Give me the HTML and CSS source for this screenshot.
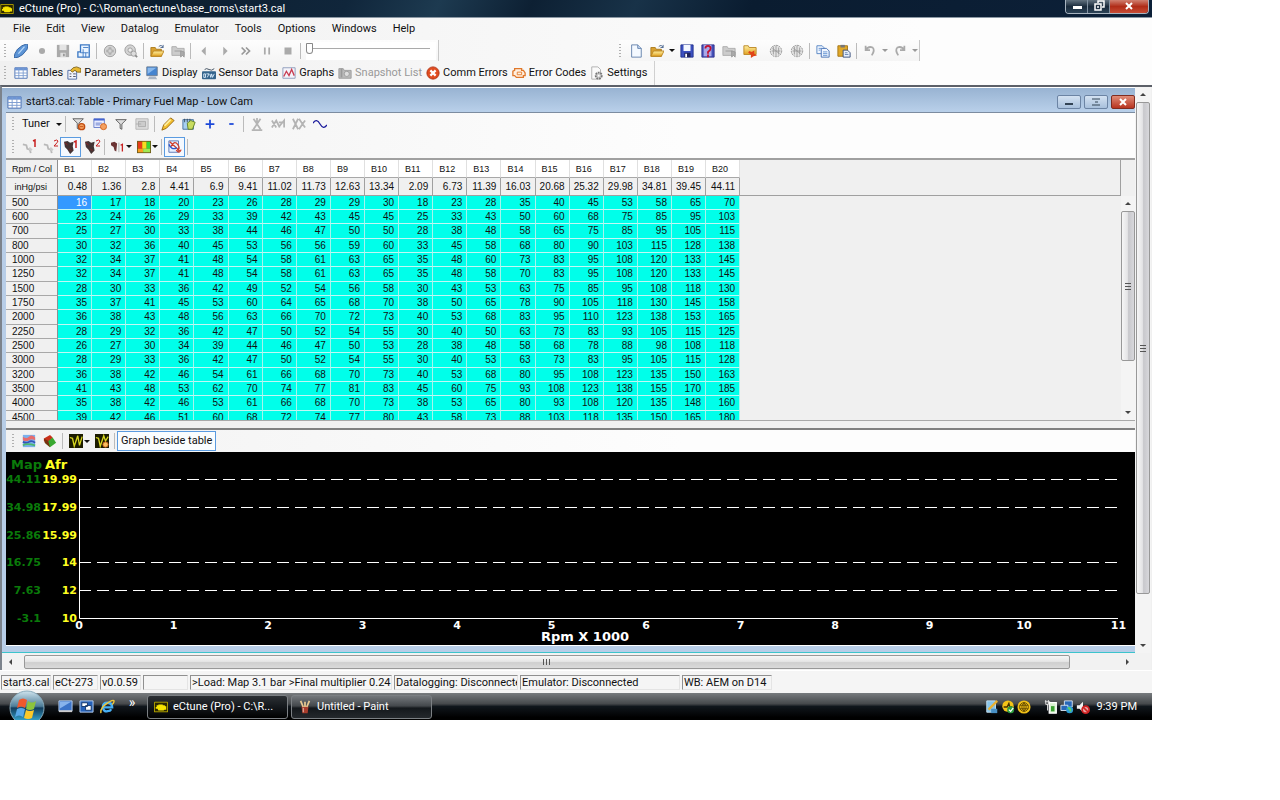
FILE: index.html
```
<!DOCTYPE html>
<html lang="en">
<head>
    <meta charset="UTF-8">
    <meta name="viewport" content="width=device-width, initial-scale=1.0">
    <title>eCtune (Pro)</title>
    <link rel="stylesheet" href="styles.css">
</head>
<body>
    <!-- icon set -->
    <svg class="defs" aria-hidden="true">
        <linearGradient id="gold" x2="0" y2="1"><stop stop-color="#fff0a0"/><stop offset="1" stop-color="#e0a020"/></linearGradient>
        <linearGradient id="orb" x2="0" y2="1"><stop stop-color="#cfe4ee"/><stop offset=".45" stop-color="#4d7d98"/><stop offset=".5" stop-color="#123c5c"/><stop offset="1" stop-color="#3fc4f0"/></linearGradient>
        <symbol id="i-engine" viewBox="0 0 16 12"><rect width="16" height="12" rx="1" fill="#b8a800"/><rect x="1" y="1" width="14" height="10" fill="#2a2600"/><path d="M2 6h1V4h2V3h5v1h2l1 1h1v4h-2l-1 1H5L4 8H2z" fill="#f6e400"/></symbol>
        <symbol id="i-plug" viewBox="0 0 16 16"><path d="M0 16l1-5 3-5 5-4 5-2 2 1-1 5-5 6-5 3z" fill="#5c94d6" stroke="#2c5c9c"/><path d="M5 11l7-8" stroke="#b8d8f8" stroke-width="1.5"/></symbol>
        <symbol id="i-dot" viewBox="0 0 16 16"><circle cx="8" cy="8" r="3.5" fill="#aaa"/></symbol>
        <symbol id="i-save-off" viewBox="0 0 16 16"><path d="M1 1h14v14H1z" fill="#aaa"/><path d="M4 1h8v6H4z" fill="#e4e4e4"/><path d="M5 10h6v5H5z" fill="#ddd"/><path d="M8 11h2v3H8z" fill="#999"/></symbol>
        <symbol id="i-save" viewBox="0 0 16 16"><path d="M1 1h14v14H1z" fill="#3c50c0" stroke="#20308c"/><path d="M4 1h8v7H4z" fill="#f4f8ff"/><path d="M5 10h7v5H5z" fill="#20245c"/><path d="M6 11h2v4H6z" fill="#fff"/></symbol>
        <symbol id="i-save-q" viewBox="0 0 16 16"><path d="M1 1h14v14H1z" fill="#4450b8" stroke="#30308c"/><path d="M3 1h9v13H3z" fill="#a8a8e8"/><path d="M5 5q0-3 3-3t3 3q0 2-3 4v2M8 12v3" fill="none" stroke="#c01030" stroke-width="2"/></symbol>
        <symbol id="i-map" viewBox="0 0 16 16"><path d="M4 1h10v14H1V9h3z" fill="#eaf4ff" stroke="#3c78c4" stroke-width="1.5"/><path d="M4 2v8h9M7 6v9M10 10v5M7 4h6" fill="none" stroke="#3c78c4"/></symbol>
        <symbol id="i-disc" viewBox="0 0 16 16"><circle cx="8" cy="8" r="6.5" fill="#d4d4d4" stroke="#999"/><path d="M8 4v8M4 8h8" stroke="#999" stroke-width="3"/><path d="M8 5v6M5 8h6" stroke="#eee"/></symbol>
        <symbol id="i-disc-s" viewBox="0 0 16 16"><circle cx="7" cy="7" r="6" fill="#d4d4d4" stroke="#999"/><circle cx="7" cy="7" r="2.5" fill="#eee" stroke="#999"/><circle cx="11" cy="11" r="3" fill="#ddd" stroke="#999"/><path d="M13 13l2 2" stroke="#888" stroke-width="2"/></symbol>
        <symbol id="i-folder" viewBox="0 0 16 16"><path d="M1 14V4h5l1 2h6v8z" fill="#d8a030" stroke="#a87818"/><path d="M1 14l3-6h12l-3 6z" fill="url(#gold)" stroke="#b88420"/><path d="M10 3q3-3 5 1M15 1v3h-3" fill="none" stroke="#46618c"/></symbol>
        <symbol id="i-folder-off" viewBox="0 0 16 16"><path d="M1 12V3h5l1 2h8v8H1z" fill="#ccc" stroke="#aaa"/><path d="M4 8h8M11 8v7l2-2 2 2V9z" fill="#aaa" stroke="#999"/></symbol>
        <symbol id="i-folder-x" viewBox="0 0 16 16"><path d="M1 12V2h5l1 2h8v8z" fill="url(#gold)" stroke="#b88420"/><path d="M7 8l3 1 3-2v4l3 2-4 1-3 2v-4l-3-2z" fill="#e04418"/></symbol>
        <symbol id="i-prev" viewBox="0 0 16 16"><path d="M10 3v10L5 8z" fill="#aaa"/></symbol>
        <symbol id="i-play" viewBox="0 0 16 16"><path d="M6 3v10l5-5z" fill="#aaa"/></symbol>
        <symbol id="i-ff" viewBox="0 0 16 16"><path d="M3 4l4 4-4 4M8 4l4 4-4 4" fill="none" stroke="#999" stroke-width="2"/></symbol>
        <symbol id="i-pause" viewBox="0 0 16 16"><path d="M5.500 4v8M10.500 4v8" stroke="#aaa" stroke-width="2"/></symbol>
        <symbol id="i-stop" viewBox="0 0 16 16"><path d="M4 4h8v8H4z" fill="#aaa"/></symbol>
        <symbol id="i-new" viewBox="0 0 16 16"><path d="M3 1h7l4 4v10H3z" fill="#f4f9ff" stroke="#5c7ca8"/><path d="M10 1v4h4" fill="#c8dcf4" stroke="#5c7ca8"/></symbol>
        <symbol id="i-chip" viewBox="0 0 16 16"><circle cx="8" cy="8" r="6.500" fill="#e4e4e4" stroke="#888" stroke-dasharray="2 1"/><path d="M5 3v9M8 2v12M11 4v8M3 8h10M4 5l8 6" stroke="#999"/></symbol>
        <symbol id="i-copy" viewBox="0 0 16 16"><path d="M1 2h6l2 2v7H1z" fill="#f0f6ff" stroke="#5080c0"/><path d="M6 5h6l3 3v7H6z" fill="#f0f6ff" stroke="#3c68b0"/><path d="M3 5h3M3 7h2M8 9h5M8 11h5M8 13h5" stroke="#6090d0"/></symbol>
        <symbol id="i-paste" viewBox="0 0 16 16"><path d="M1 2h11v12H1z" fill="#e0a828" stroke="#a07010"/><path d="M4 1h5v3H4z" fill="#777"/><path d="M7 7h5l3 3v5H7z" fill="#e8f0fc" stroke="#304878"/><path d="M9 10h3M9 12h4" stroke="#6080b0"/></symbol>
        <symbol id="i-undo" viewBox="0 0 16 16"><path d="M3 2v5h5M3 7q3-5 8-3 3 3-1 9" fill="none" stroke="#aaa" stroke-width="2"/></symbol>
        <symbol id="i-redo" viewBox="0 0 16 16"><path d="M13 2v5H8M13 7q-3-5-8-3-3 3 1 9" fill="none" stroke="#aaa" stroke-width="2"/></symbol>
        <symbol id="i-table" viewBox="0 0 16 16"><path d="M1 2h14v12H1z" fill="#fff" stroke="#446cb0"/><path d="M1 2h14v3H1z" fill="#6c94d4"/><path d="M1 8h14M1 11h14M5.500 2v12M10.500 2v12" stroke="#7c9cd0"/></symbol>
        <symbol id="i-params" viewBox="0 0 16 16"><path d="M1 5h10v10H1z" fill="#f0f4fc" stroke="#4464a0"/><path d="M3 9h2M3 12h2M7 9h3M7 12h3" stroke="#445"/><path d="M4 5l3-3 4-1 5 2v4h-4l-3-2-3 2z" fill="#e8b830" stroke="#7c6018"/></symbol>
        <symbol id="i-display" viewBox="0 0 16 16"><path d="M2 1h12v10H2z" fill="#4484d0" stroke="#6c7c90"/><path d="M3 2h10L3 9z" fill="#88b8ec"/><path d="M5 12h7l2 3H3z" fill="#a8b4c4"/></symbol>
        <symbol id="i-sensor" viewBox="0 0 16 16"><path d="M3 4q2-2 5 0t6-1" fill="none" stroke="#345"/><rect x="0" y="6" width="16" height="9" rx="1" fill="#34648c"/><path d="M2 9h2v4H2zM5 9h3l-2 4M9 9l1 4 1-4 1 4 2-4" fill="none" stroke="#dff0ff"/></symbol>
        <symbol id="i-graph" viewBox="0 0 16 16"><path d="M1 2h14v12H1z" fill="#f4f4fa" stroke="#8898b8"/><path d="M2 12l3-6 3 5 3-7 3 7" fill="none" stroke="#c83c50" stroke-width="1.500"/></symbol>
        <symbol id="i-camera" viewBox="0 0 16 16"><path d="M1 3h5l1 2h8v9H1z" fill="#bbb" stroke="#999"/><circle cx="10" cy="9" r="3" fill="#ddd" stroke="#999"/><path d="M4 3v10" stroke="#999" stroke-width="2"/></symbol>
        <symbol id="i-error" viewBox="0 0 16 16"><circle cx="8" cy="8" r="7" fill="#e04c20" stroke="#b03010"/><path d="M5 5l6 6M11 5l-6 6" stroke="#fff" stroke-width="2.500"/></symbol>
        <symbol id="i-codes" viewBox="0 0 16 16"><path d="M3 5V3h8v2h2l2 3v3h-2v2H5l-2-2H1V6z" fill="#fff0e0" stroke="#e0782c" stroke-width="1.500"/><path d="M6 7h5v3H6z" fill="none" stroke="#e0782c"/></symbol>
        <symbol id="i-settings" viewBox="0 0 16 16"><path d="M2 1h7l3 3v11H2z" fill="#fafafa" stroke="#aaa"/><circle cx="10" cy="11" r="3.500" fill="#ccc" stroke="#777" stroke-width="2" stroke-dasharray="2 1"/><circle cx="10" cy="11" r="1" fill="#fff"/></symbol>
        <symbol id="i-filter" viewBox="0 0 16 16"><path d="M2 3h12L9 8v6l-2-1V8z" fill="#ddd" stroke="#555"/></symbol>
        <symbol id="i-filter-x" viewBox="0 0 16 16"><path d="M1 2h12L8 7v7l-2-1V7z" fill="#ddd" stroke="#555"/><circle cx="11" cy="11" r="3.500" fill="#f4a060" stroke="#c04c10" stroke-width="1.500"/><path d="M9 11h4" stroke="#c04c10"/></symbol>
        <symbol id="i-list-x" viewBox="0 0 16 16"><path d="M1 2h12v10H1z" fill="#e8ecff" stroke="#6078c8"/><path d="M1 3h12" stroke="#4464d0" stroke-width="2"/><path d="M3 7h7M3 9h5" stroke="#6078c8"/><circle cx="12" cy="11" r="3.500" fill="#f4a060" stroke="#d0601c"/></symbol>
        <symbol id="i-box-off" viewBox="0 0 16 16"><path d="M1 2h14v12H1z" fill="#ddd" stroke="#b4b4b4"/><path d="M4 5h8v6H4zM1 8h6" fill="#ccc" stroke="#aaa"/></symbol>
        <symbol id="i-pencil" viewBox="0 0 16 16"><path d="M1 15l2-6 8-8 4 3-9 9z" fill="#f4c030" stroke="#94640c"/><path d="M4 10l7-7" stroke="#fff0a0" stroke-width="2"/></symbol>
        <symbol id="i-edit-map" viewBox="0 0 16 16"><path d="M1 3h12v11H1z" fill="#a8d0f0" stroke="#406c98"/><path d="M3 2v4M6 2v4M9 2v4" stroke="#345"/><path d="M6 7l4-3 5 2-3 8H7z" fill="#c8dc60" stroke="#5c7c20"/></symbol>
        <symbol id="i-plus" viewBox="0 0 16 16"><path d="M8 3v10M3 8h10" stroke="#1c48d8" stroke-width="2"/></symbol>
        <symbol id="i-minus" viewBox="0 0 16 16"><path d="M6 8h5" stroke="#1c48d8" stroke-width="2"/></symbol>
        <symbol id="i-interp-v" viewBox="0 0 16 16"><path d="M4 2l8 12M12 2L4 14M2 15h12M8 1v6" fill="none" stroke="#b4b4b4" stroke-width="2"/></symbol>
        <symbol id="i-interp-h" viewBox="0 0 16 16"><path d="M1 4l5 8M1 12l5-8 4 8M9 6h6M10 10l5-6v8" fill="none" stroke="#b4b4b4" stroke-width="2"/></symbol>
        <symbol id="i-interp" viewBox="0 0 16 16"><path d="M1 2l6 12M7 2L1 14M8 2l4 6-4 6M15 4l-3 4 3 4" fill="none" stroke="#b4b4b4" stroke-width="2"/></symbol>
        <symbol id="i-wave" viewBox="0 0 16 16"><path d="M0 7q4-6 8 1t8 1" fill="none" stroke="#1c1c9c" stroke-width="1.500"/></symbol>
        <symbol id="i-cam-off" viewBox="0 0 16 16"><path d="M1 5l4 1 1 4 3 1 1 4" fill="none" stroke="#b8b8b8" stroke-width="2"/><path d="M8 9l3 3" stroke="#ccc" stroke-width="3"/></symbol>
        <symbol id="i-cam" viewBox="0 0 16 16"><path d="M0 2l4-1 3 2 4-1-1 5 1 5-4 4-3-5-3-3z" fill="#443434"/><path d="M1 3l3 3M6 10l2 2" stroke="#a02020"/></symbol>
        <symbol id="i-one" viewBox="0 0 6 8"><path d="M1 2l2-1v7" fill="none" stroke="#c82020" stroke-width="1.500"/></symbol>
        <symbol id="i-two" viewBox="0 0 6 8"><path d="M1 2q3-2 4 0 0 1-4 5h4" fill="none" stroke="#c82020"/></symbol>
        <symbol id="i-cam-sel" viewBox="0 0 16 16"><path d="M0 3l4-1 3 2-1 9-2-1-1-4-3-2z" fill="#6c3434"/><path d="M9 3v11" stroke="#aaa"/><path d="M11 6l2-1v8" fill="none" stroke="#c82020" stroke-width="1.500"/></symbol>
        <symbol id="i-heat" viewBox="0 0 16 16"><path d="M0 1h16v14H0z" fill="#705c18"/><path d="M1 2h5v8H1z" fill="#e83c18"/><path d="M6 2h5v8H6z" fill="#f8dc20"/><path d="M11 2h4v8h-4z" fill="#38d838"/><path d="M1 10h6v4H1z" fill="#f8a020"/><path d="M7 10h8v4H7z" fill="#a0e850"/></symbol>
        <symbol id="i-trace" viewBox="0 0 16 16"><path d="M1 1h11v13H1z" fill="#e8f0ff" stroke="#5070b0"/><path d="M2 2l12 11M3 8q4-8 8-3t-1 7q3 4 5-1" fill="none" stroke="#d03c28" stroke-width="1.500"/><path d="M1 5q3 7 9 4" fill="none" stroke="#3058c8" stroke-width="1.500"/></symbol>
        <symbol id="i-layers" viewBox="0 0 16 16"><path d="M1 1h14v14H1z" fill="#7cb0ec"/><path d="M1 3q4 3 7 0t7 1v3q-4-2-7 0t-7 0z" fill="#e86c6c"/><path d="M1 9q4 2 7 0t7 1" fill="none" stroke="#3454b8" stroke-width="2"/><path d="M1 13q4-3 14 0" fill="none" stroke="#4cb870" stroke-width="2"/></symbol>
        <symbol id="i-surface" viewBox="0 0 16 16"><path d="M1 5l7-4 3 3-5 7-5-3z" fill="#c83018"/><path d="M6 8l5-4 4 6-7 5-6-5z" fill="#38a830"/><path d="M1 5l5 3 2 7-6-5z" fill="#783010"/></symbol>
        <symbol id="i-scope" viewBox="0 0 16 16"><path d="M0 0h16v16H0z" fill="#1c1c00"/><path d="M1 4l3 1 2 9 4-12 2 11 3-10" fill="none" stroke="#d8d820" stroke-width="1.500"/></symbol>
        <symbol id="i-scope-x" viewBox="0 0 16 16"><path d="M0 0h16v16H0z" fill="#1c1c00"/><path d="M1 4l3 1 2 9 4-12 2 6 3-5" fill="none" stroke="#d8d820" stroke-width="1.500"/><circle cx="12" cy="12" r="3" fill="#f8c060" stroke="#d0601c"/></symbol>
        <symbol id="i-desk" viewBox="0 0 16 16"><path d="M1 2h14v11H1z" fill="#3c74c8" stroke="#b8d0f0"/><path d="M2 3h12L2 10z" fill="#88b4ec"/><path d="M1 13h14" stroke="#ccc" stroke-width="2"/></symbol>
        <symbol id="i-switch" viewBox="0 0 16 16"><path d="M1 2h14v12H1z" fill="#2460b8" stroke="#b8d0f0"/><path d="M3 4h6v4H3zM7 7h6v5H7z" fill="#fff" stroke="#14386c"/></symbol>
        <symbol id="i-ie" viewBox="0 0 16 16"><path d="M4 9h9q0-5-5-5t-5 5q1 5 5 4 3 0 4-2" fill="none" stroke="#48b0f4" stroke-width="2.500"/><path d="M1 15Q0 10 7 5t8-3q0 2-2 4" fill="none" stroke="#f0c838" stroke-width="1.500"/></symbol>
        <symbol id="i-paint" viewBox="0 0 16 16"><path d="M4 7h8l-1 8H5z" fill="#a83c2c"/><path d="M6 8L3 1M8 8V2M10 8l3-7" stroke="#e8c890" stroke-width="2"/><path d="M6 9v5" stroke="#f0d0c0"/></symbol>
        <symbol id="i-tool" viewBox="0 0 16 16"><path d="M2 1h10v13H2z" fill="#88c4e8" stroke="#cce4f4"/><path d="M4 11L14 1" stroke="#e8b030" stroke-width="2.500"/><path d="M7 10h7v5H7z" fill="#4890c4"/></symbol>
        <symbol id="i-shield" viewBox="0 0 16 16"><circle cx="8" cy="7" r="6.500" fill="#f4c418"/><path d="M3 8h4l2-4 1 4h3" fill="none" stroke="#443000" stroke-width="1.500"/><circle cx="11" cy="11" r="4" fill="#30a040"/><path d="M9 11l2 2 3-4" fill="none" stroke="#fff" stroke-width="1.500"/></symbol>
        <symbol id="i-globe" viewBox="0 0 16 16"><circle cx="8" cy="8" r="7.500" fill="#f0c018"/><path d="M3 6h10M3 10h10M8 3v10M8 3Q3 8 8 13M8 3q5 5 0 10" fill="none" stroke="#604800"/><circle cx="8" cy="8" r="5" fill="none" stroke="#604800"/></symbol>
        <symbol id="i-battery" viewBox="0 0 16 16"><path d="M6 3h8v12H6z" fill="#d8f0d0" stroke="#fff" stroke-width="1.500"/><path d="M8 7h4v6H8z" fill="#38a030"/><path d="M1 2h6M2 0v5h3V0M4 5v7" fill="none" stroke="#eee"/></symbol>
        <symbol id="i-net" viewBox="0 0 16 16"><path d="M5 1h9v7H5z" fill="#2868b8" stroke="#e0ecf8"/><path d="M1 6h8v6H1z" fill="#2868b8" stroke="#e0ecf8"/><circle cx="11" cy="11" r="4" fill="#2c9cd4"/><path d="M9 9q3 0 3 4" stroke="#60d060" fill="none" stroke-width="2"/></symbol>
        <symbol id="i-mute" viewBox="0 0 16 16"><path d="M1 6h3l4-4v12l-4-4H1z" fill="#f0f0f0"/><circle cx="11" cy="11" r="4" fill="#e8a0a0" stroke="#d02020" stroke-width="2"/><path d="M8 8l6 6" stroke="#d02020" stroke-width="2"/></symbol>
        <symbol id="i-orb" viewBox="0 0 36 36"><circle cx="18" cy="18" r="17" fill="url(#orb)" stroke="#8ab" /><path d="M10 10q4-3 8 0l-2 8q-4-3-8 0z" fill="#f0582c"/><path d="M19 11q4 3 8 0l-2 8q-4 2-8 0z" fill="#8cc43c"/><path d="M8 19q4-2 8 0l-2 8q-4-3-8 0z" fill="#58a8e8"/><path d="M17 20q4 2 8 0l-2 8q-4 2-8 0z" fill="#fcc828"/></symbol>
    </svg>

    <div class="desktop">
        <header class="app-title">
            <svg class="app-icon"><use href="#i-engine"/></svg>
            <h1>eCtune (Pro) - C:\Roman\ectune\base_roms\start3.cal</h1>
            <div class="caption-buttons">
                <button aria-label="Minimize"><svg viewBox="0 0 12 12"><path d="M2 6h9v3H2z" fill="#fff"/></svg></button>
                <button aria-label="Restore"><svg viewBox="0 0 12 12"><path d="M5 3V1h6v6H9M2 4h6v6H2zM5 6v2" fill="none" stroke="#fff" stroke-width="1.500"/></svg></button>
                <button class="close" aria-label="Close"><svg viewBox="0 0 12 12"><path d="M3 3l6 6M9 3l-6 6" stroke="#fff" stroke-width="2"/></svg></button>
            </div>
        </header>

        <nav class="menu">
            <button>File</button><button>Edit</button><button>View</button><button>Datalog</button><button>Emulator</button><button>Tools</button><button>Options</button><button>Windows</button><button>Help</button>
        </nav>

        <div class="toolbar-row">
            <div class="toolbar" data-icons="plug dot save-off map | disc disc-s | folder folder-off | prev play ff pause stop |">
                <input type="range" class="seek" aria-label="Playback position" min="0" max="100" value="0">
            </div>
            <div class="toolbar file-bar" data-icons="new folder v save save-q folder-off folder-x _ chip chip | copy paste | undo v redo v"></div>
        </div>

        <div class="toolbar view-bar">
            <button><svg><use href="#i-table"/></svg>Tables</button>
            <button><svg><use href="#i-params"/></svg>Parameters</button>
            <button><svg><use href="#i-display"/></svg>Display</button>
            <button><svg><use href="#i-sensor"/></svg>Sensor Data</button>
            <button><svg><use href="#i-graph"/></svg>Graphs</button>
            <button disabled><svg><use href="#i-camera"/></svg>Snapshot List</button>
            <button><svg><use href="#i-error"/></svg>Comm Errors</button>
            <button><svg><use href="#i-codes"/></svg>Error Codes</button>
            <button><svg><use href="#i-settings"/></svg>Settings</button>
        </div>

        <main class="mdi">
            <section class="child">
                <div class="child-title">
                    <svg class="icon"><use href="#i-table"/></svg>
                    <h2>start3.cal: Table - Primary Fuel Map - Low Cam</h2>
                    <div class="child-buttons">
                        <button aria-label="Minimize table"><svg viewBox="0 0 12 12"><path d="M2 8h8" stroke="#345" stroke-width="2"/></svg></button>
                        <button aria-label="Maximize table"><svg viewBox="0 0 12 12"><path d="M2 3h8M2 9h8M5 6h3" stroke="#345"/></svg></button>
                        <button class="close" aria-label="Close table"><svg viewBox="0 0 12 12"><path d="M3 3l6 6M9 3l-6 6" stroke="#fff" stroke-width="2"/></svg></button>
                    </div>
                </div>

                <div class="toolbar tune-bar" data-icons="| filter-x list-x filter box-off | pencil edit-map plus minus | interp-v interp-h interp wave">
                    <button class="tuner">Tuner <span class="caret"></span></button>
                </div>
                <div class="toolbar cam-bar" data-icons="cam-off:one cam-off:two *cam:one cam:two | cam-sel v heat v | *trace |"></div>

                <div class="grid-panel">
                    <div class="grid-scroll">
                        <table id="fuelTable">
                            <thead></thead>
                            <tbody></tbody>
                        </table>
                    </div>
                    <div class="grid-side">
                        <div class="scrollbar">
                            <button class="up" aria-label="Scroll rows up"></button>
                            <div class="thumb"></div>
                            <button class="down" aria-label="Scroll rows down"></button>
                        </div>
                    </div>
                </div>

                <div class="toolbar graph-bar" data-icons="layers surface | scope v scope-x |">
                    <button class="beside">Graph beside table</button>
                </div>
                <div class="graph">
                    <svg id="chart" viewBox="0 0 1129 192" preserveAspectRatio="xMinYMin" role="img" aria-label="Map and Afr by rpm"></svg>
                </div>
            </section>

            <div class="scrollbar mdi-v">
                <button class="up" aria-label="Scroll up"></button>
                <div class="thumb"></div>
                <button class="down" aria-label="Scroll down"></button>
            </div>
            <div class="scrollbar mdi-h">
                <button class="left" aria-label="Scroll left"></button>
                <div class="thumb"></div>
                <button class="right" aria-label="Scroll right"></button>
            </div>
        </main>

        <footer class="status">
            <span>start3.cal</span><span>eCt-273</span><span>v0.0.59</span><span></span><span>&gt;Load: Map 3.1 bar &gt;Final multiplier 0.24</span><span>Datalogging: Disconnected</span><span>Emulator: Disconnected</span><span>WB: AEM on D14</span>
        </footer>

        <div class="taskbar">
            <button class="start" aria-label="Start"><svg><use href="#i-orb"/></svg></button>
            <div class="quick">
                <button aria-label="Show desktop"><svg class="icon"><use href="#i-desk"/></svg></button>
                <button aria-label="Switch windows"><svg class="icon"><use href="#i-switch"/></svg></button>
                <button aria-label="Browser"><svg class="icon"><use href="#i-ie"/></svg></button>
            </div>
            <span class="more">»</span>
            <button class="task active"><svg><use href="#i-engine"/></svg>eCtune (Pro) - C:\R...</button>
            <button class="task"><svg><use href="#i-paint"/></svg>Untitled - Paint</button>
            <div class="tray">
                <svg class="icon"><use href="#i-tool"/></svg>
                <svg class="icon"><use href="#i-shield"/></svg>
                <svg class="icon"><use href="#i-globe"/></svg>
                <svg class="icon battery"><use href="#i-battery"/></svg>
                <svg class="icon"><use href="#i-net"/></svg>
                <svg class="icon"><use href="#i-mute"/></svg>
                <span class="clock">9:39 PM</span>
            </div>
        </div>
    </div>
    <script src="app.js"></script>
</body>
</html>
```
FILE: styles.css
```
* {
    box-sizing: border-box;
}
body {
    margin: 0;
    background: #fff;
    font-family: Roboto, "Liberation Sans", sans-serif;
    font-size: 11px;
    line-height: 14px;
    color: #111;
}
button {
    margin: 0;
    padding: 0;
    border: 0;
    background: none;
    font: inherit;
    color: inherit;
    white-space: nowrap;
}
h1, h2 {
    margin: 0;
    font-weight: normal;
}
svg {
    display: block;
    flex: none;
}
.defs {
    position: absolute;
    width: 0;
    height: 0;
}
.icon {
    width: 15px;
    height: 15px;
}
.desktop {
    display: flex;
    flex-direction: column;
    width: 90vw;
    height: 90vh;
    overflow: hidden;
    background: linear-gradient(90deg, #f0f0f0, #fdfdfd 80%);
}

/* main window caption */
.app-title {
    display: flex;
    align-items: center;
    flex: none;
    height: 18px;
    padding-right: 3px;
    border-bottom: 1px solid #8b98a4;
    background: linear-gradient(115deg, #0a1826 0%, #10263b 30%, #1d3a50 38%, #0d2033 46%, #183248 55%, #0a1c30 65%, #0c2038 100%);
    color: #fff;
}
.app-icon {
    width: 14px;
    height: 10px;
    margin-right: 5px;
}
.app-title h1 {
    font-size: 11px;
}
.caption-buttons {
    display: flex;
    align-self: flex-start;
    height: 14px;
    margin-left: auto;
    border: 1px solid #a8b4c0;
    border-top: 0;
    border-radius: 0 0 4px 4px;
    overflow: hidden;
}
.caption-buttons button {
    display: flex;
    justify-content: center;
    width: 22px;
    border-right: 1px solid #8090a0;
    background: linear-gradient(#62727f, #1a2b3c 50%, #2c4256);
}
.caption-buttons svg {
    width: 12px;
    height: 12px;
}
.caption-buttons .close {
    width: 38px;
    border-right: 0;
    background: linear-gradient(#d08070, #b02c18 50%, #c84c34);
}

.menu {
    display: flex;
    align-items: center;
    flex: none;
    height: 22px;
    padding-left: 13px;
    gap: 16px;
}

/* toolbars */
.toolbar-row {
    display: flex;
    flex: none;
}
.toolbar {
    display: flex;
    align-items: center;
    flex: none;
    height: 22px;
    padding-left: 8px;
}
.toolbar::before {
    content: "";
    width: 2px;
    height: 14px;
    margin-left: -4px;
    margin-right: 4px;
    background: repeating-linear-gradient(#b0b0b0 0 1px, transparent 1px 3px);
}
.tool {
    position: relative;
    display: flex;
    align-items: center;
    justify-content: center;
    width: 21px;
    height: 20px;
}
.tool > svg:first-child {
    width: 14px;
    height: 14px;
}
/* cam number over the corner of its icon */
.tool .badge {
    position: absolute;
    top: 2px;
    right: 1px;
    width: 6px;
    height: 8px;
}
.tool.on {
    border: 1px solid #5a9be0;
    background: #f4f9ff;
}
.sep {
    width: 1px;
    height: 16px;
    margin: 0 2px;
    background: #bbb;
}
.space {
    width: 5px;
}
.drop {
    display: flex;
    align-items: center;
    justify-content: center;
    width: 9px;
    height: 20px;
}
.child .drop {
    margin-left: -4px;
}
.caret {
    display: inline-block;
    border: 3px solid transparent;
    border-top-color: #111;
    border-bottom: 0;
}
.toolbar-row .toolbar {
    height: 21px;
    border-right: 1px solid #c8c8c8;
    background: linear-gradient(#fdfdfd, #f5f5f5);
}
.toolbar-row .file-bar {
    margin-left: 180px;
    padding: 0 0 0 4px;
}
.file-bar .drop ~ .sep ~ .sep ~ .drop .caret {
    border-top-color: #999;
}
.seek {
    appearance: none;
    width: 130px;
    height: 18px;
    margin: 0 2px 0 3px;
    background: linear-gradient(#aaa, #aaa) 0 6px / 124px 1px no-repeat #fff;
}
.seek::-webkit-slider-thumb {
    appearance: none;
    width: 7px;
    height: 11px;
    margin-top: -4px;
    border: 1px solid #888;
    border-radius: 1px 1px 4px 4px;
    background: #fff;
}
.view-bar {
    align-self: flex-start;
    height: 24px;
    gap: 4px;
    padding: 0 7px 0 8px;
    border-right: 1px solid #d0d0d0;
}
.view-bar button {
    display: flex;
    align-items: center;
    gap: 3px;
}
.view-bar svg {
    width: 14px;
    height: 14px;
}
.view-bar button:disabled {
    color: #999;
}

/* MDI area */
.mdi {
    display: grid;
    grid-template-columns: minmax(0, 1fr) 16px;
    grid-template-rows: minmax(0, 1fr) 17px;
    flex: 1;
    min-height: 0;
    padding-right: 1px;
    border-top: 2px solid #5c6068;
    border-left: 2px solid #7c838c;
    background: #f0f0f0;
}
.child {
    display: flex;
    flex-direction: column;
    min-width: 0;
    padding: 0 0 6px 4px;
    border-bottom: 1px solid #3cc4cc;
    background: #b7cde7;
    overflow: hidden;
}
.child-title {
    display: flex;
    align-items: center;
    flex: none;
    height: 25px;
    padding-top: 4px;
    margin-left: -4px;
    padding-left: 5px;
    gap: 4px;
    border-top: 1px solid #fff;
    background: linear-gradient(#98b3d2, #b9d0ea);
}
.child-title h2 {
    font-size: 11px;
}
.child-buttons {
    display: flex;
    gap: 3px;
    margin-left: auto;
}
.child-buttons button {
    display: flex;
    align-items: center;
    justify-content: center;
    width: 24px;
    height: 14px;
    border: 1px solid #6c84a4;
    border-radius: 2px;
    background: linear-gradient(#d4e2f2, #a8c0dc);
}
.child-buttons .close {
    border-color: #802c20;
    background: linear-gradient(#e08c78, #b83420);
}
.child-buttons svg {
    width: 12px;
    height: 12px;
}
.child .toolbar {
    height: 23px;
    padding-left: 10px;
    background: linear-gradient(90deg, #f2f2f2, #fdfdfd 60%);
}
.child .tune-bar {
    border-top: 1px solid #7c8ca0;
}
.tuner {
    display: flex;
    align-items: center;
    gap: 6px;
    width: 42px;
    padding-left: 4px;
    margin-right: 3px;
}

/* fuel map */
.grid-panel {
    display: flex;
    flex: none;
    height: 263px;
    border-top: 2px solid #a0a0a0;
    border-bottom: 1px solid #a8a8a8;
    background: #f0f0f0;
    font-family: "Liberation Sans", Arial, sans-serif;
    font-size: 10px;
    line-height: 12px;
}
.grid-scroll {
    flex: 1;
    min-width: 0;
    overflow: hidden;
}
table {
    width: 100%;
    table-layout: fixed;
    border-collapse: separate;
    border-spacing: 0;
}
th, td {
    height: 14px;
    padding: 0;
    font-weight: normal;
    white-space: nowrap;
}
tbody tr:nth-child(3n) > * {
    height: 15px;
}
th:first-child {
    width: 52px;
    padding-left: 6px;
    border-right: 1px solid #909090;
    border-bottom: 1px solid #a8a8a8;
    background: #f0f0f0;
    text-align: left;
}
thead th {
    width: 3.06%;
    height: 18px;
    padding-left: 6px;
    border-right: 1px solid #e0e0e0;
    border-bottom: 1px solid #a8a8a8;
    background: #fff;
    text-align: left;
    font-size: 9px;
}
thead td {
    height: 17px;
    padding-right: 4px;
    border-right: 1px solid #a0a0a0;
    border-bottom: 1px solid #a0a0a0;
    text-align: right;
}
thead th:first-child {
    font-size: 9px;
}
thead .rest {
    width: auto;
    background: #f0f0f0;
    border-right: 1px solid #a0a0a0;
    border-bottom: 0;
}
thead tr:last-child .rest {
    border-bottom: 1px solid #a0a0a0;
}
tbody td {
    padding-right: 4px;
    border-right: 1px solid #a4f4ec;
    border-bottom: 1px solid #c0f8f4;
    background: #00ffea;
    text-align: right;
}
tbody td.selected {
    background: #3399ff;
    color: #fff;
}
.grid-side {
    display: flex;
    flex: none;
    width: 14px;
    padding-top: 36px;
}

/* scrollbars */
.scrollbar {
    display: flex;
    flex: 1;
    flex-direction: column;
    background: #f4f4f4;
}
.scrollbar button {
    display: flex;
    align-items: center;
    justify-content: center;
    flex: none;
    width: 100%;
    height: 15px;
}
.scrollbar button::before {
    content: "";
    border: 3px solid transparent;
}
.scrollbar .up::before {
    border-top: 0;
    border-bottom-color: #444;
}
.scrollbar .down {
    margin-top: auto;
}
.scrollbar .down::before {
    border-bottom: 0;
    border-top-color: #444;
}
.scrollbar .left::before {
    border-left: 0;
    border-right-color: #444;
}
.scrollbar .right::before {
    border-right: 0;
    border-left-color: #444;
}
.thumb {
    display: flex;
    align-items: center;
    justify-content: center;
    height: 67%;
    border: 1px solid #989898;
    border-radius: 2px;
    background: linear-gradient(90deg, #f6f6f6, #e4e4e6 45%, #c8c8cc 55%, #d8d8dc);
}
.thumb::before {
    content: "";
    width: 6px;
    height: 7px;
    background: repeating-linear-gradient(#555 0 1px, transparent 1px 3px);
}
.mdi-v {
    padding: 0 1px;
}
.mdi-v .thumb {
    height: 87%;
}
.mdi-h {
    grid-column: 1 / 3;
    flex-direction: row;
    align-items: center;
    background: #f2f2f2;
}
.mdi-h button {
    width: 16px;
    height: 16px;
}
.mdi-h .thumb {
    width: 91%;
    height: 14px;
    margin-left: 6px;
    background: linear-gradient(#f6f6f6, #e6e6e6 45%, #cfcfcf 55%, #dadada);
}
.mdi-h .thumb::before {
    width: 7px;
    height: 6px;
    background: repeating-linear-gradient(90deg, #555 0 1px, transparent 1px 3px);
}
.mdi-h .right {
    margin-left: auto;
    margin-right: 16px;
}

/* graph pane */
.child .graph-bar {
    height: 24px;
    margin-top: 7px;
    border-top: 2px solid #808080;
    box-shadow: 0 -7px #f0f0f0;
}
.beside {
    height: 20px;
    padding: 0 3px;
    border: 1px solid #5a9be0;
    background: #fafdff;
}
.graph {
    flex: 1;
    min-height: 0;
    border-bottom: 1px solid #fff;
    background: #000;
}
.graph svg {
    width: 100%;
    height: 100%;
}
.graph text {
    font: bold 11px "DejaVu Sans", Verdana, sans-serif;
    fill: #fff;
}
.graph .map {
    fill: #0a7a0a;
}
.graph .afr {
    fill: #ffff20;
}
.graph .legend, .graph .axis-name {
    font-size: 13px;
}
.graph path {
    fill: none;
    stroke: #fff;
}
.graph .guide {
    stroke-dasharray: 12 6;
}

.status {
    display: grid;
    grid-template-columns: 50px 45px 41px 45px 202px 124px 160px 90px;
    gap: 2px;
    flex: none;
    height: 23px;
    padding: 4px 1px 3px;
    border-top: 1px solid #fff;
    background: #f5f5f5;
}
.status span {
    padding-left: 1px;
    border: 1px solid #e4e4e4;
    border-top-color: #909090;
    border-left-color: #909090;
    overflow: hidden;
    white-space: nowrap;
}

/* taskbar */
.taskbar {
    display: flex;
    align-items: center;
    flex: none;
    height: 27px;
    padding-left: 9px;
    background: linear-gradient(#777b7e, #46494c 40%, #10161c 50%, #000 90%);
    color: #fff;
}
.start {
    align-self: flex-start;
    width: 36px;
    height: 36px;
    margin-top: -3px;
}
.start svg {
    width: 36px;
    height: 36px;
}
.quick {
    display: flex;
    gap: 6px;
    margin-left: 13px;
}
.more {
    width: 14px;
    height: 24px;
    margin: 0 8px 0 10px;
    font-size: 14px;
    text-align: center;
}
.task {
    display: flex;
    align-items: center;
    gap: 5px;
    width: 141px;
    height: 24px;
    margin-right: 3px;
    padding-left: 6px;
    border: 1px solid #7c8084;
    border-radius: 3px;
    background: linear-gradient(#74787c, #44484c 45%, #14181c 55%, #24282c);
}
.task.active {
    background: linear-gradient(#2c3034, #14181c 50%, #000);
}
.task svg {
    width: 14px;
    height: 14px;
}
.tray {
    display: flex;
    align-items: center;
    gap: 2px;
    height: 24px;
    margin-left: auto;
    margin-right: 15px;
}
.tray .icon {
    width: 14px;
    height: 14px;
}
.tray .battery {
    margin-left: 11px;
}
.clock {
    margin-left: 5px;
}
```
FILE: app.js
```
const load = [0.48, 1.36, 2.8, 4.41, 6.9, 9.41, 11.02, 11.73, 12.63, 13.34, 2.09, 6.73, 11.39, 16.03, 20.68, 25.32, 29.98, 34.81, 39.45, 44.11];

// rpm followed by the fuel value of each column
const fuel = [
    [500, 16, 17, 18, 20, 23, 26, 28, 29, 29, 30, 18, 23, 28, 35, 40, 45, 53, 58, 65, 70],
    [600, 23, 24, 26, 29, 33, 39, 42, 43, 45, 45, 25, 33, 43, 50, 60, 68, 75, 85, 95, 103],
    [700, 25, 27, 30, 33, 38, 44, 46, 47, 50, 50, 28, 38, 48, 58, 65, 75, 85, 95, 105, 115],
    [800, 30, 32, 36, 40, 45, 53, 56, 56, 59, 60, 33, 45, 58, 68, 80, 90, 103, 115, 128, 138],
    [1000, 32, 34, 37, 41, 48, 54, 58, 61, 63, 65, 35, 48, 60, 73, 83, 95, 108, 120, 133, 145],
    [1250, 32, 34, 37, 41, 48, 54, 58, 61, 63, 65, 35, 48, 58, 70, 83, 95, 108, 120, 133, 145],
    [1500, 28, 30, 33, 36, 42, 49, 52, 54, 56, 58, 30, 43, 53, 63, 75, 85, 95, 108, 118, 130],
    [1750, 35, 37, 41, 45, 53, 60, 64, 65, 68, 70, 38, 50, 65, 78, 90, 105, 118, 130, 145, 158],
    [2000, 36, 38, 43, 48, 56, 63, 66, 70, 72, 73, 40, 53, 68, 83, 95, 110, 123, 138, 153, 165],
    [2250, 28, 29, 32, 36, 42, 47, 50, 52, 54, 55, 30, 40, 50, 63, 73, 83, 93, 105, 115, 125],
    [2500, 26, 27, 30, 34, 39, 44, 46, 47, 50, 53, 28, 38, 48, 58, 68, 78, 88, 98, 108, 118],
    [3000, 28, 29, 33, 36, 42, 47, 50, 52, 54, 55, 30, 40, 53, 63, 73, 83, 95, 105, 115, 128],
    [3200, 36, 38, 42, 46, 54, 61, 66, 68, 70, 73, 40, 53, 68, 80, 95, 108, 123, 135, 150, 163],
    [3500, 41, 43, 48, 53, 62, 70, 74, 77, 81, 83, 45, 60, 75, 93, 108, 123, 138, 155, 170, 185],
    [4000, 35, 38, 42, 46, 53, 61, 66, 68, 70, 73, 38, 53, 65, 80, 93, 108, 120, 135, 148, 160],
    [4500, 39, 42, 46, 51, 60, 68, 72, 74, 77, 80, 43, 58, 73, 88, 103, 118, 135, 150, 165, 180]
];

function buildTable() {
    const table = document.querySelector('#fuelTable');
    table.tHead.innerHTML = `
        <tr><th>Rpm / Col</th>${load.map((v, i) => `<th>B${i + 1}</th>`).join('')}<th class="rest"></th></tr>
        <tr><th>&nbsp;inHg/psi</th>${load.map(v => `<td>${v}</td>`).join('')}<td class="rest"></td></tr>
    `;
    table.tBodies[0].innerHTML = fuel.map((row, r) => `
        <tr><th>${row[0]}</th>${row.slice(1).map((v, c) => `<td${r + c === 0 ? ' class="selected"' : ''}>${v}</td>`).join('')}</tr>
    `).join('');
}

// "|" separator, "_" space, "v" drop-down arrow, "*" pressed, ":" badge
function toolHtml(name) {
    if (name === '|') return '<span class="sep"></span>';
    if (name === '_') return '<span class="space"></span>';
    if (name === 'v') return '<button class="drop" aria-label="More"><span class="caret"></span></button>';
    const on = name[0] === '*';
    const [icon, badge] = name.replace('*', '').split(':');
    return `<button class="tool${on ? ' on' : ''}" aria-label="${icon}"><svg><use href="#i-${icon}"/></svg>${badge ? `<svg class="badge"><use href="#i-${badge}"/></svg>` : ''}</button>`;
}

function buildToolbars() {
    document.querySelectorAll('[data-icons]').forEach(bar => {
        const html = bar.dataset.icons.split(' ').map(toolHtml).join('');
        const tunerFirst = bar.querySelector('.tuner');
        bar.insertAdjacentHTML(tunerFirst ? 'beforeend' : 'afterbegin', html);
    });
}

function buildChart() {
    const map = ['44.11', '34.98', '25.86', '16.75', '7.63', '-3.1'];
    const afr = ['19.99', '17.99', '15.99', '14', '12', '10'];
    const left = 73, bottom = 166, stepX = 94.5, stepY = 27.8;
    let out = '<text class="map legend" x="5" y="17">Map</text><text class="afr legend" x="39" y="17">Afr</text>';

    map.forEach((v, i) => {
        const y = Math.round(27 + i * stepY);
        out += `<text class="map" x="35" y="${y + 4}" text-anchor="end">${v}</text>`;
        out += `<text class="afr" x="71" y="${y + 4}" text-anchor="end">${afr[i]}</text>`;
        if (i !== 2 && i !== 5) {
            out += `<path class="guide" d="M${left} ${y + .5}H1112"/>`;
        }
    });
    for (let i = 0; i <= 11; i++) {
        out += `<text x="${left + i * stepX}" y="177" text-anchor="middle">${i}</text>`;
    }
    out += `<path d="M${left + .5} 27V${bottom + .5}H1112"/>`;
    out += '<text class="axis-name" x="579" y="189" text-anchor="middle">Rpm X 1000</text>';
    document.querySelector('#chart').innerHTML = out;
}

buildTable();
buildToolbars();
buildChart();
```
